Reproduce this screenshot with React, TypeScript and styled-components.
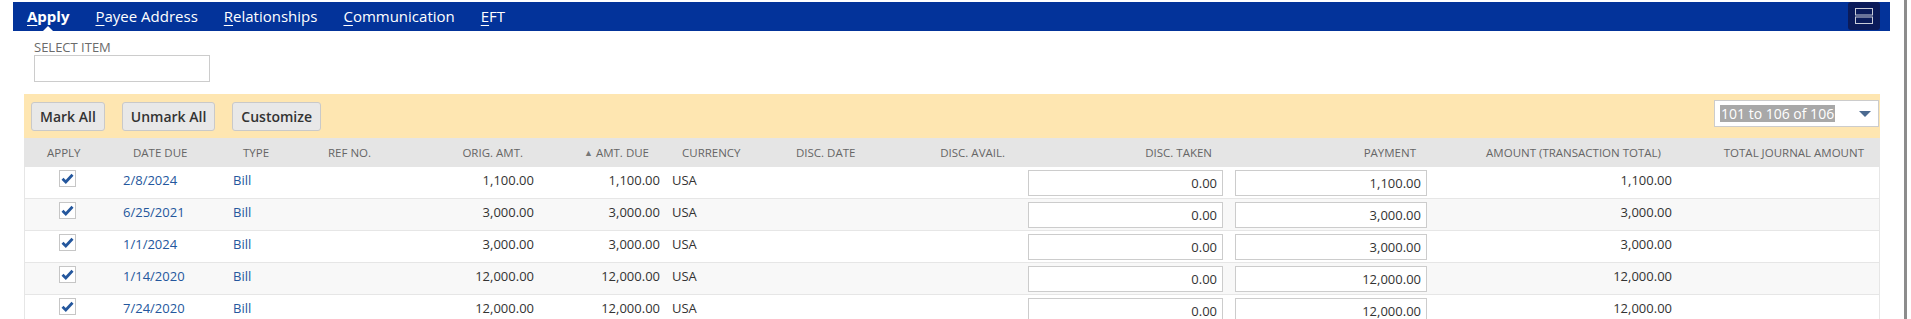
import React from 'react';
import styled, { createGlobalStyle } from 'styled-components';

const GlobalStyle = createGlobalStyle`
  html, body { margin: 0; padding: 0; background: #ffffff; }
  body {
    font-family: "Open Sans", "Liberation Sans", Arial, sans-serif;
    color: #333333;
    overflow: hidden;
  }
  * { box-sizing: border-box; }
`;

const Page = styled.div`
  width: 1907px;
  min-height: 319px;
  border-right: 3px solid #8c8c8c;
  padding-top: 2px;
`;

const NavBar = styled.nav`
  position: relative;
  margin: 0 14px 0 13px;
  height: 29px;
  background: #03339a;
  display: flex;
  align-items: flex-start;
  padding-left: 14px;
  gap: 26px;
`;

const Tab = styled.a<{ $active?: boolean }>`
  position: relative;
  height: 29px;
  line-height: 29px;
  color: #ffffff;
  font-size: 15px;
  font-weight: ${(p) => (p.$active ? 700 : 400)};
  text-decoration: none;
  white-space: nowrap;
  cursor: pointer;

  u {
    text-decoration: underline;
    text-decoration-thickness: 1px;
    text-underline-offset: 3px;
  }

  ${(p) =>
    p.$active &&
    `
    &::after {
      content: "";
      position: absolute;
      left: 50%;
      bottom: 0;
      margin-left: -5px;
      border-left: 5px solid transparent;
      border-right: 5px solid transparent;
      border-bottom: 5px solid #ffffff;
    }
  `}
`;

const MenuButton = styled.button`
  margin-left: auto;
  margin-right: 10px;
  width: 32px;
  height: 28px;
  border: none;
  border-radius: 3px;
  background: #0b1b5a;
  display: flex;
  align-items: center;
  justify-content: center;
  padding: 0;
`;

const FilterArea = styled.div`
  padding: 9px 0 0 34px;
`;

const FieldLabel = styled.div`
  font-size: 13px;
  line-height: 14px;
  color: #6b6b6b;
  text-transform: uppercase;
`;

const TextInput = styled.input`
  display: block;
  margin-top: 1px;
  width: 176px;
  height: 27px;
  border: 1px solid #cccccc;
  background: #ffffff;
  outline: none;
`;

const Toolbar = styled.div`
  margin: 12px 24px 0 24px;
  height: 44px;
  background: #fee6b1;
  display: flex;
  align-items: flex-start;
  padding: 8px 1px 0 7px;
  gap: 17px;
`;

const ToolButton = styled.button`
  height: 29px;
  padding: 0 8px;
  border: 1px solid #c9c9c9;
  border-radius: 3px;
  background: #e8e8e8;
  color: #333333;
  font-family: "Open Sans", "Liberation Sans", Arial, sans-serif;
  font-size: 14px;
  font-weight: 600;
  line-height: 27px;
  cursor: pointer;
`;

const PageSelect = styled.div`
  margin-left: auto;
  margin-top: -2px;
  width: 165px;
  height: 27px;
  border: 1px solid #cccccc;
  background: #ffffff;
  display: flex;
  align-items: center;
  padding: 0 7px 0 5px;
`;

const SelectedText = styled.span`
  background: #a8a8a8;
  color: #ffffff;
  font-size: 14px;
  line-height: 17px;
  padding: 0 1px;
  white-space: nowrap;
`;

const Caret = styled.span`
  margin-left: auto;
  width: 0;
  height: 0;
  border-left: 6px solid transparent;
  border-right: 6px solid transparent;
  border-top: 6px solid #4b6a90;
`;

const Table = styled.div`
  margin: 0 24px;
`;

const COLS = '92px 110px 85px 109px 119px 126px 114px 121px 121px 207px 204px 245px 203px';

const HeaderRow = styled.div`
  display: grid;
  grid-template-columns: ${COLS};
  height: 29px;
  background: #e5e5e5;
`;

type Align = 'left' | 'right' | 'center';

const HeadCell = styled.div<{ $align: Align; $pl?: number }>`
  display: flex;
  align-items: center;
  justify-content: ${(p) => (p.$align === 'right' ? 'flex-end' : p.$align === 'center' ? 'center' : 'flex-start')};
  padding: 0 16px 0 ${(p) => (p.$pl !== undefined ? p.$pl : 17)}px;
  font-size: 11.5px;
  color: #666666;
  text-transform: uppercase;
  white-space: nowrap;
`;

const SortMark = styled.span`
  font-size: 9px;
  color: #777777;
  margin-right: 3px;
`;

const DataRow = styled.div<{ $alt: boolean }>`
  display: grid;
  grid-template-columns: ${COLS};
  height: 32px;
  background: ${(p) => (p.$alt ? '#f8f8f8' : '#ffffff')};
  border-left: 1px solid #e6e6e6;
  border-right: 1px solid #e6e6e6;
  border-bottom: 1px solid #e6e6e6;
`;

const Cell = styled.div<{ $align: Align }>`
  padding: 5px 6px 0 6px;
  font-size: 13px;
  line-height: 17px;
  color: #333333;
  text-align: ${(p) => p.$align};
  white-space: nowrap;
`;

const CheckCell = styled.div`
  padding: 3px 0 0 34px;
`;

const CheckBox = styled.span`
  display: flex;
  align-items: center;
  justify-content: center;
  width: 17px;
  height: 17px;
  border: 1px solid #c6c6c6;
  background: #ffffff;
`;

const LinkText = styled.a`
  color: #24579d;
  text-decoration: none;
  cursor: pointer;
`;

const InputCell = styled.div`
  padding: 3px 6px 0 6px;
  display: flex;
  justify-content: flex-end;
`;

const AmountInput = styled.input`
  width: 195px;
  height: 26px;
  border: 1px solid #cccccc;
  background: #ffffff;
  padding: 0 5px;
  font-family: "Open Sans", "Liberation Sans", Arial, sans-serif;
  font-size: 13px;
  color: #333333;
  text-align: right;
  outline: none;
`;

type Item = {
  date: string;
  type: string;
  orig: string;
  due: string;
  currency: string;
  taken: string;
  payment: string;
  total: string;
};

const items: Item[] = [
  { date: '2/8/2024', type: 'Bill', orig: '1,100.00', due: '1,100.00', currency: 'USA', taken: '0.00', payment: '1,100.00', total: '1,100.00' },
  { date: '6/25/2021', type: 'Bill', orig: '3,000.00', due: '3,000.00', currency: 'USA', taken: '0.00', payment: '3,000.00', total: '3,000.00' },
  { date: '1/1/2024', type: 'Bill', orig: '3,000.00', due: '3,000.00', currency: 'USA', taken: '0.00', payment: '3,000.00', total: '3,000.00' },
  { date: '1/14/2020', type: 'Bill', orig: '12,000.00', due: '12,000.00', currency: 'USA', taken: '0.00', payment: '12,000.00', total: '12,000.00' },
  { date: '7/24/2020', type: 'Bill', orig: '12,000.00', due: '12,000.00', currency: 'USA', taken: '0.00', payment: '12,000.00', total: '12,000.00' },
];

const headers: { label: string; align: Align; pl?: number; sorted?: boolean }[] = [
  { label: 'Apply', align: 'left', pl: 23 },
  { label: 'Date Due', align: 'left' },
  { label: 'Type', align: 'left' },
  { label: 'Ref No.', align: 'left' },
  { label: 'Orig. Amt.', align: 'right' },
  { label: 'Amt. Due', align: 'right', sorted: true },
  { label: 'Currency', align: 'left' },
  { label: 'Disc. Date', align: 'left' },
  { label: 'Disc. Avail.', align: 'right' },
  { label: 'Disc. Taken', align: 'right' },
  { label: 'Payment', align: 'right' },
  { label: 'Amount (Transaction Total)', align: 'right' },
  { label: 'Total Journal Amount', align: 'right' },
];

const tabs = [
  { first: 'A', rest: 'pply', active: true },
  { first: 'P', rest: 'ayee Address' },
  { first: 'R', rest: 'elationships' },
  { first: 'C', rest: 'ommunication' },
  { first: 'E', rest: 'FT' },
];

const CheckIcon = () => (
  <svg width="13" height="11" viewBox="0 0 13 11">
    <path d="M1.5 5.8 L4.8 9 L11.5 1.8" fill="none" stroke="#24579d" strokeWidth="2.8" strokeLinejoin="miter" />
  </svg>
);

const MenuIcon = () => (
  <svg width="18" height="16" viewBox="0 0 18 16">
    <rect x="0.5" y="0.5" width="17" height="6.5" fill="none" stroke="#c9ccd8" strokeWidth="1" />
    <rect x="0.5" y="9" width="17" height="6.5" fill="none" stroke="#c9ccd8" strokeWidth="1" />
  </svg>
);

export default function App() {
  return (
    <>
      <GlobalStyle />
      <Page>
        <NavBar>
          {tabs.map((t) => (
            <Tab key={t.first + t.rest} $active={t.active}>
              <u>{t.first}</u>
              {t.rest}
            </Tab>
          ))}
          <MenuButton aria-label="menu">
            <MenuIcon />
          </MenuButton>
        </NavBar>

        <FilterArea>
          <FieldLabel>Select Item</FieldLabel>
          <TextInput />
        </FilterArea>

        <Toolbar>
          <ToolButton>Mark All</ToolButton>
          <ToolButton>Unmark All</ToolButton>
          <ToolButton>Customize</ToolButton>
          <PageSelect>
            <SelectedText>101 to 106 of 106</SelectedText>
            <Caret />
          </PageSelect>
        </Toolbar>

        <Table>
          <HeaderRow>
            {headers.map((h) => (
              <HeadCell key={h.label} $align={h.align} $pl={h.pl}>
                {h.sorted && <SortMark>▲</SortMark>}
                {h.label}
              </HeadCell>
            ))}
          </HeaderRow>
          {items.map((it, i) => (
            <DataRow key={i} $alt={i % 2 === 1}>
              <CheckCell>
                <CheckBox>
                  <CheckIcon />
                </CheckBox>
              </CheckCell>
              <Cell $align="left">
                <LinkText>{it.date}</LinkText>
              </Cell>
              <Cell $align="left">
                <LinkText>{it.type}</LinkText>
              </Cell>
              <Cell $align="left" />
              <Cell $align="right">{it.orig}</Cell>
              <Cell $align="right">{it.due}</Cell>
              <Cell $align="left">{it.currency}</Cell>
              <Cell $align="left" />
              <Cell $align="right" />
              <InputCell>
                <AmountInput defaultValue={it.taken} />
              </InputCell>
              <InputCell>
                <AmountInput defaultValue={it.payment} />
              </InputCell>
              <Cell $align="right">{it.total}</Cell>
              <Cell $align="right" />
            </DataRow>
          ))}
        </Table>
      </Page>
    </>
  );
}
